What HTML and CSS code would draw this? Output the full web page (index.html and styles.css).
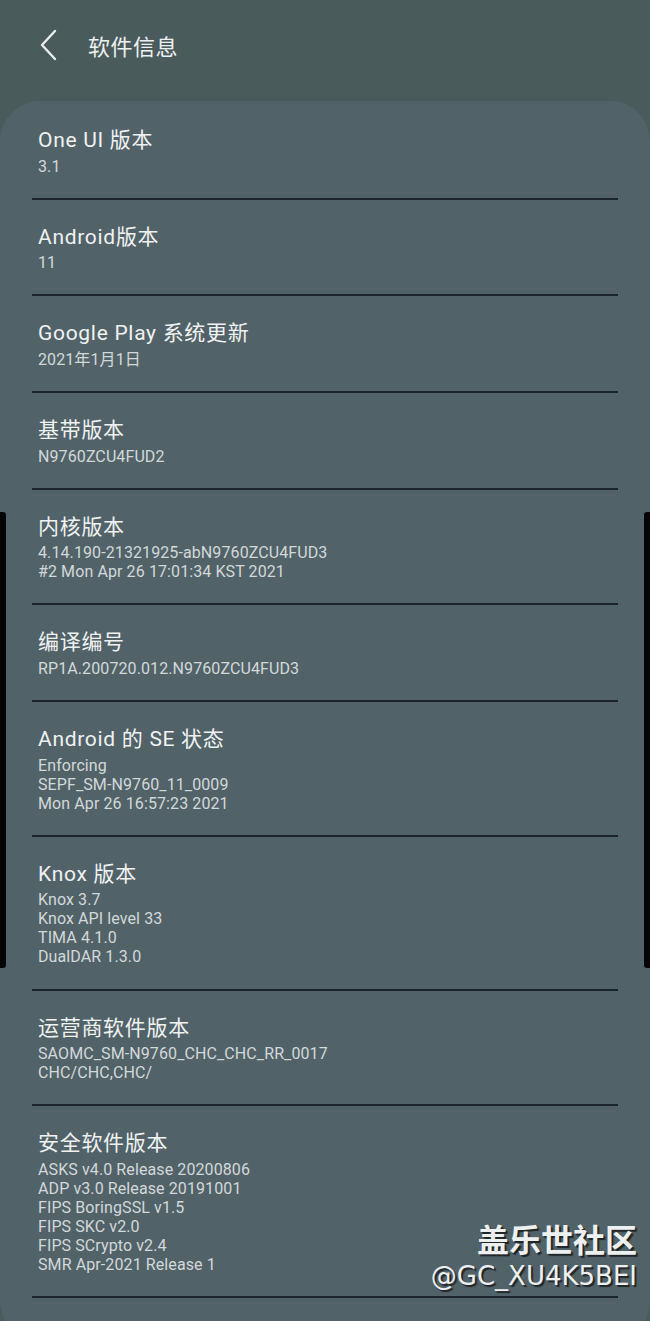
FILE: index.html
```html
<!DOCTYPE html>
<html lang="zh">
<head>
<meta charset="utf-8">
<link rel="stylesheet" href="styles.css">
</head>
<body>
<div class="page">
  <header class="topbar">
    <svg class="back" width="20" height="32" viewBox="0 0 20 32"><path d="M16 2 L3 16 L16 30" fill="none" stroke="#e8ecec" stroke-width="2.4" stroke-linecap="round" stroke-linejoin="round"/></svg>
    <h1 class="title">软件信息</h1>
  </header>
  <main class="card">
    <div class="row first"><div class="t">One UI 版本</div><div class="s">3.1</div></div>
    <div class="row"><div class="t">Android版本</div><div class="s">11</div></div>
    <div class="row"><div class="t">Google Play 系统更新</div><div class="s">2021年1月1日</div></div>
    <div class="row"><div class="t">基带版本</div><div class="s">N9760ZCU4FUD2</div></div>
    <div class="row"><div class="t">内核版本</div><div class="s">4.14.190-21321925-abN9760ZCU4FUD3<br>#2 Mon Apr 26 17:01:34 KST 2021</div></div>
    <div class="row"><div class="t">编译编号</div><div class="s">RP1A.200720.012.N9760ZCU4FUD3</div></div>
    <div class="row"><div class="t">Android 的 SE 状态</div><div class="s">Enforcing<br>SEPF_SM-N9760_11_0009<br>Mon Apr 26 16:57:23 2021</div></div>
    <div class="row"><div class="t">Knox 版本</div><div class="s">Knox 3.7<br>Knox API level 33<br>TIMA 4.1.0<br>DualDAR 1.3.0</div></div>
    <div class="row"><div class="t">运营商软件版本</div><div class="s">SAOMC_SM-N9760_CHC_CHC_RR_0017<br>CHC/CHC,CHC/</div></div>
    <div class="row"><div class="t">安全软件版本</div><div class="s">ASKS v4.0 Release 20200806<br>ADP v3.0 Release 20191001<br>FIPS BoringSSL v1.5<br>FIPS SKC v2.0<br>FIPS SCrypto v2.4<br>SMR Apr-2021 Release 1</div></div>
    <div class="divider"></div>
  </main>
  <div class="edge left"></div>
  <div class="edge right"></div>
  <div class="watermark">
    <div class="wm1">盖乐世社区</div>
    <div class="wm2">@GC_XU4K5BEI</div>
  </div>
</div>
</body>
</html>
```
FILE: styles.css
```css
* { box-sizing: border-box; }
html, body { margin: 0; padding: 0; }
body {
  width: 650px;
  height: 1321px;
  overflow: hidden;
  background: #4a5b5c;
  font-family: Roboto, "Noto Sans CJK SC", sans-serif;
}
.page { position: relative; width: 650px; height: 1321px; }
.topbar {
  height: 101px;
  display: flex;
  align-items: flex-start;
  padding: 29px 0 0 39px;
}
.back { display: block; }
.title {
  margin: 1px 0 0 29px;
  font-weight: 400;
  font-size: 22px;
  line-height: 30px;
  letter-spacing: 0.5px;
  color: #eef1f1;
  font-family: "Noto Sans CJK SC", sans-serif;
}
.card {
  background: #516369;
  border-radius: 40px;
  height: 1240px;
  padding: 0 32px;
}
.row {
  padding: 24px 6px 22.2px;
  border-top: 2px solid #1b242a;
}
.row.first { border-top: none; padding-top: 26px; }
.t {
  font-size: 21px;
  line-height: 26px;
  letter-spacing: 0.7px;
  color: #f0f2f2;
}
.s {
  margin-top: 3.5px;
  font-size: 16px;
  line-height: 19px;
  letter-spacing: 0.1px;
  color: #d3d8d9;
}
.divider { border-top: 2px solid #1b242a; }
.edge {
  position: absolute;
  top: 512px;
  width: 6px;
  height: 456px;
  background: #050505;
}
.edge.left { left: 0; border-radius: 0 3px 3px 0; }
.edge.right { right: 0; border-radius: 3px 0 0 3px; }
.watermark {
  position: absolute;
  right: 13px;
  top: 1217px;
  text-align: right;
  color: #eef0f0;
}
.wm1 {
  font-family: "Noto Sans CJK SC", sans-serif;
  font-weight: 700;
  font-size: 32px;
  line-height: 42px;
  text-shadow: 2px 2px 1px #1f2426;
}
.wm2 {
  font-family: "DejaVu Sans", sans-serif;
  font-size: 26px;
  line-height: 30px;
  margin-top: 2px;
  text-shadow: 2px 2px 1px #1f2426;
}
```
